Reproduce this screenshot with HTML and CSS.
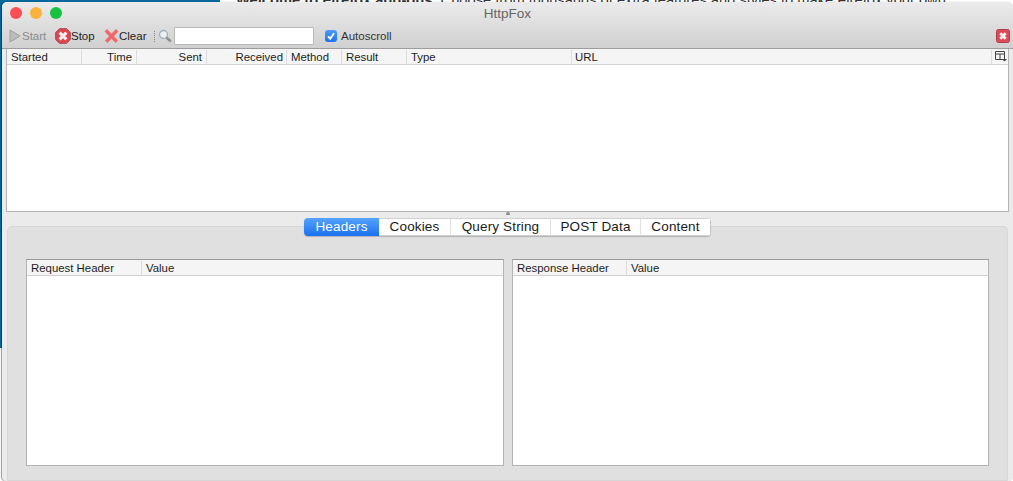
FILE: index.html
```html
<!DOCTYPE html>
<html lang="en">
<head>
<meta charset="utf-8">
<title>HttpFox</title>
<link rel="stylesheet" href="styles.css">
</head>
<body>
<div class="desktop">
  <div class="page-blue"></div>
  <p class="page-text"><b>Welcome to Firefox add-ons.</b> Choose from thousands of extra features and styles to make Firefox your own.</p>
</div>
<main class="window">
  <header class="chrome">
    <div class="titlebar">
      <div class="lights">
        <span class="light red"></span><span class="light amber"></span><span class="light green"></span>
      </div>
      <div class="title">HttpFox</div>
    </div>
    <div class="toolbar">
      <button class="tool disabled">
        <svg class="ic-start" width="12" height="14" viewBox="0 0 12 14"><path d="M1 1l10 6-10 6z" fill="#bcbcbc" stroke="#a0a0a0"/></svg>Start
      </button>
      <button class="tool stop">
        <svg width="16" height="16" viewBox="0 0 16 16"><path d="M4.500.7h7l3.800 3.800v7l-3.800 3.800h-7L.7 11.500v-7z" fill="#dd4650" stroke="#a8474c"/><path d="M4.600 4.600l6.800 6.800M11.400 4.600l-6.800 6.800" stroke="#fbeeee" stroke-width="3"/></svg>Stop
      </button>
      <button class="tool clear">
        <svg width="15" height="14" viewBox="0 0 15 14"><path d="M1.800 1.300l11 11.400M13.200 1.300l-11 11.400" stroke="#f2686a" stroke-width="3.400"/></svg>Clear
      </button>
      <span class="grip"></span>
      <svg class="ic-search" width="14" height="14" viewBox="0 0 14 14"><circle cx="5.500" cy="5.500" r="4" fill="#e8f0f6" stroke="#a4afb8" stroke-width="1.300"/><path d="M8.500 8.500l4.300 4" stroke="#8a8f94" stroke-width="2.400"/></svg>
      <input class="search" type="text" aria-label="Search">
      <label class="autoscroll">
        <span class="check"><svg width="12" height="12" viewBox="0 0 12 12"><path d="M3 6.300l2.200 2.400L9 3.200" fill="none" stroke="#fff" stroke-width="1.800"/></svg></span>Autoscroll
      </label>
      <button class="close-btn" aria-label="Close">
        <svg width="14" height="14" viewBox="0 0 14 14"><rect x=".5" y=".5" width="13" height="13" rx="2" fill="#dd4a55" stroke="#b04048"/><path d="M4.300 4.300l5.400 5.400M9.700 4.300l-5.400 5.400" stroke="#fbeeee" stroke-width="2.800"/></svg>
      </button>
    </div>
  </header>

  <section class="tree requests">
    <div class="tree-head">
      <span class="col c-started">Started</span>
      <span class="col c-time">Time</span>
      <span class="col c-sent">Sent</span>
      <span class="col c-received">Received</span>
      <span class="col c-method">Method</span>
      <span class="col c-result">Result</span>
      <span class="col c-type">Type</span>
      <span class="col c-url">URL</span>
      <span class="col c-picker">
        <svg width="12" height="11" viewBox="0 0 12 11"><path d="M.5.500h9v8h-9zM.5 3h9M5 3v5.500" fill="none" stroke="#444"/><path d="M7 8h5L9.500 10.500z" fill="#444"/></svg>
      </span>
    </div>
  </section>

  <div class="splitter"><span class="knob"></span></div>

  <section class="details">
    <nav class="tabs">
      <span class="tab active t-headers">Headers</span>
      <span class="tab t-cookies">Cookies</span>
      <span class="tab t-query">Query String</span>
      <span class="tab t-post">POST Data</span>
      <span class="tab t-content">Content</span>
    </nav>
    <div class="panel">
      <div class="tree pane pane-req">
        <div class="tree-head">
          <span class="col c-name-req">Request Header</span>
          <span class="col c-value">Value</span>
        </div>
      </div>
      <div class="tree pane pane-res">
        <div class="tree-head">
          <span class="col c-name-res">Response Header</span>
          <span class="col c-value">Value</span>
        </div>
      </div>
    </div>
  </section>
</main>
</body>
</html>
```
FILE: styles.css
```css
* { box-sizing: border-box; }
html, body { margin: 0; height: 100%; overflow: hidden; }
body {
  position: relative;
  width: 1013px;
  height: 481px;
  background: #fff;
  font-family: "Liberation Sans", Arial, sans-serif;
  color: #222;
}
.desktop { position: absolute; inset: 0; overflow: hidden; }
.page-blue { position: absolute; left: 0; top: 0; width: 220px; height: 348px; background: #066a9e; }
.page-text {
  position: absolute; left: 236px; top: -6px; margin: 0; white-space: nowrap;
  font-size: 14.700px; line-height: 12px; color: #333;
}
.window {
  position: absolute; left: 2px; top: 2px; width: 1011px; height: 479px;
  display: flex; flex-direction: column;
  background: #ebebeb;
  border-radius: 5px 5px 4px 4px;
  box-shadow: -1px 0 1px rgba(0,0,0,.4);
  overflow: hidden;
}
.chrome {
  height: 47px; flex: none;
  background: linear-gradient(#ebebeb, #d0d0d0);
  border-bottom: 1px solid #9d9d9d;
}
.titlebar { position: relative; height: 22px; display: flex; align-items: center; justify-content: center; }
.lights { position: absolute; left: 8px; top: 5px; display: flex; gap: 8px; }
.light { width: 12px; height: 12px; border-radius: 50%; }
.red { background: #fc4e55; }
.amber { background: #fdb23c; }
.green { background: #16c23f; }
.title { font-size: 13.500px; color: #666; }
.toolbar { height: 24px; display: flex; align-items: center; padding-left: 7px; font-size: 11.500px; }
.tool {
  display: flex; align-items: center; height: 18px; padding: 0; border: 0; background: none;
  font: inherit; color: #222;
}
.tool.disabled { color: #8c8c8c; width: 46px; }
.ic-start { margin-right: 1px; }
.tool.stop { width: 49px; }
.tool.clear { width: 50px; }
.grip { width: 1px; height: 11px; margin-right: 3px; border-left: 1px dotted #888; }
.ic-search { margin-right: 2px; }
.search {
  width: 140px; height: 18px; margin: 0; padding: 0 4px;
  background: #fff; border: 1px solid #b9b9b9; border-radius: 1px;
}
.autoscroll { display: flex; align-items: center; margin-left: 11px; color: #333; }
.check {
  width: 12px; height: 12px; margin-right: 4px; border-radius: 3px;
  background: linear-gradient(#4b9bfa, #1c73ec);
  display: flex;
}
.close-btn { margin-left: auto; margin-right: 3px; padding: 0; border: 0; background: none; display: flex; }
.tree { background: #fff; border: 1px solid #b4b4b4; }
.requests { height: 163px; margin: 0 4px; flex: none; border-top: 0; }
.tree-head {
  display: flex; height: 16px; background: #f5f5f5;
  border-bottom: 1px solid #d2d2d2;
  font-size: 11.400px; color: #1d1d1d;
}
.col { display: block; padding: 1px 3px 0 4px; border-right: 1px solid #dcdcdc; height: 14px; line-height: 13px; margin-top: 1px; white-space: nowrap; }
.c-started { width: 75px; }
.c-time { width: 55px; text-align: right; padding-right: 4px; }
.c-sent { width: 70px; text-align: right; padding-right: 4px; }
.c-received { width: 80px; text-align: right; }
.c-method { width: 55px; }
.c-result { width: 65px; }
.c-type { width: 165px; }
.c-url { flex: 1; padding-left: 3px; }
.c-picker { width: 16px; border-right: 0; padding: 1px 0 0 3px; }
.splitter { height: 14px; flex: none; display: flex; justify-content: center; }
.knob { width: 4px; height: 3px; background: #8f8f8f; border-radius: 2px 2px 0 0; }
.details { flex: 1; position: relative; padding: 0 5px 1px 5px; display: flex; flex-direction: column; }
.tabs {
  position: absolute; left: 302px; top: -8px; z-index: 1;
  display: flex; height: 18px; width: 407px;
  background: #fff; border-radius: 4px;
  box-shadow: 0 1px 1px rgba(0,0,0,.2);
  font-size: 13.500px; line-height: 16px; letter-spacing: .15px; overflow: hidden;
}
.tab { text-align: center; border: 1px solid #d0d0d0; border-width: 1px 1px 1px 0; border-right-color: #e0e0e0; color: #1a1a1a; }
.tab:last-child { border-right-color: #c4c4c4; }
.tab.active { background: linear-gradient(#55a3fb, #1a71f1); color: #fff; border: 0; line-height: 18px; }
.t-headers { width: 75px; }
.t-cookies { width: 72px; }
.t-query { width: 100px; }
.t-post { width: 90px; }
.t-content { flex: 1; }
.panel {
  flex: 1;
  background: #e0e0e0; border: 1px solid #d6d6d6;
  border-radius: 5px 5px 0 0;
  padding: 32px 18px 14px 18px;
  display: flex; gap: 8px;
}
.pane { flex: none; height: 207px; border-top-color: #9a9a9a; }
.pane-req { width: 478px; }
.pane-res { width: 477px; }
.c-name-req { width: 115px; }
.c-name-res { width: 114px; }
.c-value { border-right: 0; flex: 1; }
```
